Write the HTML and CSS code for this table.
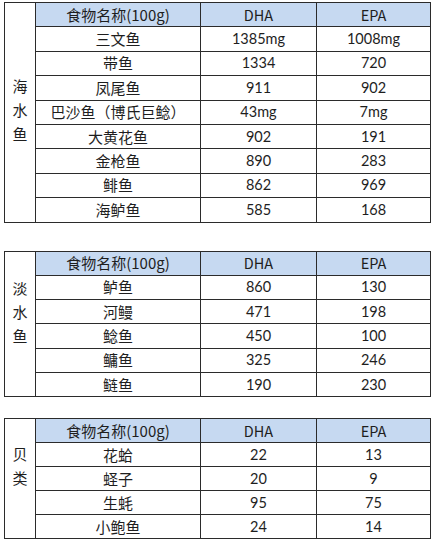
FILE: index.html
```html
<!DOCTYPE html>
<html lang="zh">
<head>
<meta charset="utf-8">
<title>鱼类DHA/EPA含量</title>
<link rel="stylesheet" href="styles.css">
</head>
<body>
<div class="page">
  <table class="fish t-sea">
    <colgroup><col class="c-cat"><col class="c-name"><col class="c-dha"><col class="c-epa"></colgroup>
    <tr class="head"><td class="cat" rowspan="9"><span>海</span><span>水</span><span>鱼</span></td><th>食物名称(100g)</th><th class="num">DHA</th><th class="num">EPA</th></tr>
    <tr><td>三文鱼</td><td class="num">1385mg</td><td class="num">1008mg</td></tr>
    <tr><td>带鱼</td><td class="num">1334</td><td class="num">720</td></tr>
    <tr><td>凤尾鱼</td><td class="num">911</td><td class="num">902</td></tr>
    <tr><td>巴沙鱼（博氏巨鲶）</td><td class="num">43mg</td><td class="num">7mg</td></tr>
    <tr><td>大黄花鱼</td><td class="num">902</td><td class="num">191</td></tr>
    <tr><td>金枪鱼</td><td class="num">890</td><td class="num">283</td></tr>
    <tr><td>鲱鱼</td><td class="num">862</td><td class="num">969</td></tr>
    <tr><td>海鲈鱼</td><td class="num">585</td><td class="num">168</td></tr>
  </table>

  <table class="fish t-fresh">
    <colgroup><col class="c-cat"><col class="c-name"><col class="c-dha"><col class="c-epa"></colgroup>
    <tr class="head"><td class="cat" rowspan="6"><span>淡</span><span>水</span><span>鱼</span></td><th>食物名称(100g)</th><th class="num">DHA</th><th class="num">EPA</th></tr>
    <tr><td>鲈鱼</td><td class="num">860</td><td class="num">130</td></tr>
    <tr><td>河鳗</td><td class="num">471</td><td class="num">198</td></tr>
    <tr><td>鲶鱼</td><td class="num">450</td><td class="num">100</td></tr>
    <tr><td>鳙鱼</td><td class="num">325</td><td class="num">246</td></tr>
    <tr><td>鲢鱼</td><td class="num">190</td><td class="num">230</td></tr>
  </table>

  <table class="fish t-shell">
    <colgroup><col class="c-cat"><col class="c-name"><col class="c-dha"><col class="c-epa"></colgroup>
    <tr class="head"><td class="cat" rowspan="5"><span>贝</span><span>类</span></td><th>食物名称(100g)</th><th class="num">DHA</th><th class="num">EPA</th></tr>
    <tr><td>花蛤</td><td class="num">22</td><td class="num">13</td></tr>
    <tr><td>蛏子</td><td class="num">20</td><td class="num">9</td></tr>
    <tr><td>生蚝</td><td class="num">95</td><td class="num">75</td></tr>
    <tr><td>小鲍鱼</td><td class="num">24</td><td class="num">14</td></tr>
  </table>
</div>
</body>
</html>
```

FILE: styles.css
```css
html, body {
  margin: 0;
  padding: 0;
  background: #ffffff;
}

.page {
  padding: 2px 2px 0 4px;
  display: flex;
  flex-direction: column;
}

.fish {
  width: 426px;
  border-collapse: collapse;
  table-layout: fixed;
  color: #1e1e1e;
  font-family: "Noto Sans CJK SC", sans-serif;
  font-size: 15px;
}

.t-sea { margin-bottom: 28px; }
.t-fresh { margin-bottom: 21px; }

.c-cat { width: 31px; }
.c-name { width: 165px; }
.c-dha { width: 116px; }
.c-epa { width: 114px; }

.fish tr { height: 24.4px; }
.t-fresh tr { height: 24.3px; }
.t-shell tr { height: 24px; }

.fish td, .fish th {
  border: 1px solid #2b2b2b;
  padding: 0;
  text-align: center;
  vertical-align: middle;
  font-weight: normal;
  line-height: 20px;
  white-space: nowrap;
  overflow: hidden;
}

.fish .head th {
  background: #c6d9f1;
  font-family: "Noto Sans CJK SC", sans-serif;
}

.fish .num {
  font-family: Lato, "Noto Sans CJK SC", sans-serif;
  font-size: 14.5px;
}

.fish .cat {
  background: #ffffff;
  vertical-align: middle;
}

.cat span {
  display: block;
  line-height: 24px;
}

.t-sea .cat { padding-bottom: 4px; }
.t-fresh .cat { padding-bottom: 24px; }
.t-shell .cat { padding-bottom: 26px; }
```
